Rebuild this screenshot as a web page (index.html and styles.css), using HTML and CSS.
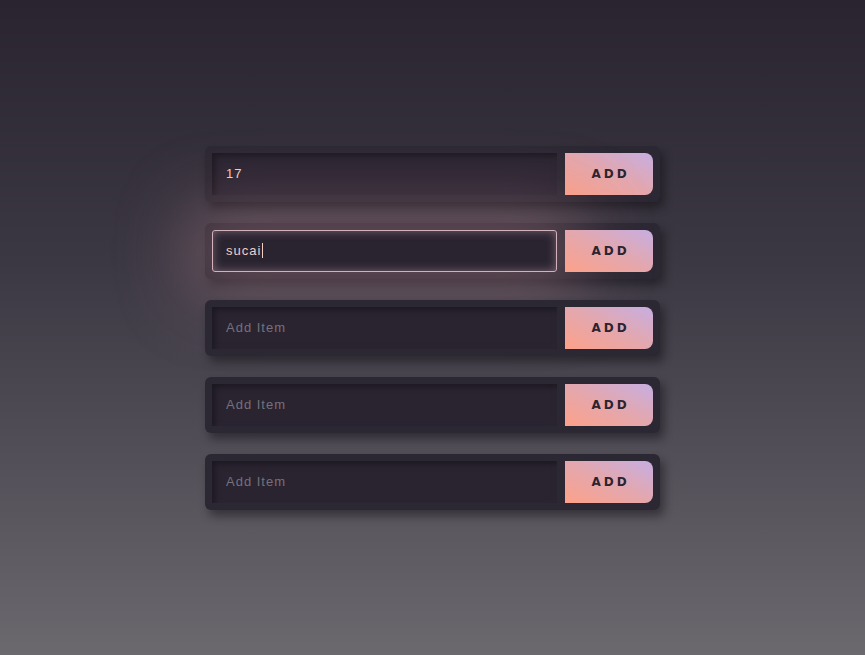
FILE: index.html
```html
<!DOCTYPE html>
<html lang="en">
<head>
	<meta charset="UTF-8">
	<title>Add Item Inputs</title>
	<link rel="stylesheet" href="styles.css">
</head>
<body>
	<div id="wrapper">
		<div class="row">
			<input class="field" type="text" value="17" placeholder="Add Item">
			<button class="addBtn">ADD</button>
		</div>
		<div class="row">
			<div class="field focused">sucai<span class="caret"></span></div>
			<button class="addBtn">ADD</button>
		</div>
		<div class="row">
			<input class="field" type="text" placeholder="Add Item">
			<button class="addBtn">ADD</button>
		</div>
		<div class="row">
			<input class="field" type="text" placeholder="Add Item">
			<button class="addBtn">ADD</button>
		</div>
		<div class="row">
			<input class="field" type="text" placeholder="Add Item">
			<button class="addBtn">ADD</button>
		</div>
	</div>
</body>
</html>
```

FILE: styles.css
```css
html, body {
	margin: 0;
	height: 100%;
}
body {
	background: linear-gradient(to bottom, #29242f 0%, #3c3843 40%, #524f58 70%, #6b686e 100%);
	font-family: "Liberation Sans", Arial, sans-serif;
	display: flex;
	align-items: center;
	justify-content: center;
}
#wrapper {
	display: flex;
	flex-direction: column;
	gap: 21px;
	width: 455px;
	margin-top: 1px;
}
.row {
	display: flex;
	gap: 8px;
	height: 42px;
	padding: 7px;
	background-color: #2c2833;
	border-radius: 6px;
	box-shadow: 4px 6px 10px rgba(10, 8, 14, 0.45);
}
.field {
	box-sizing: border-box;
	flex: 1;
	height: 42px;
	border: none;
	outline: none;
	margin: 0;
	padding: 0 14px 2px;
	background-color: #2a2431;
	box-shadow: inset 3px 3px 6px rgba(0, 0, 0, 0.35), inset -2px -2px 4px rgba(70, 62, 78, 0.15);
	color: #f3cfc4;
	font-family: "Liberation Sans", Arial, sans-serif;
	font-size: 13px;
	letter-spacing: 1px;
}
.field::placeholder {
	color: #75717b;
}
.focused {
	display: flex;
	align-items: center;
	border: 1px solid #d2b3bb;
	border-radius: 3px;
	padding: 0 13px 1px;
	box-shadow: inset 0 0 10px rgba(200, 160, 170, 0.5), 0 0 70px 24px rgba(200, 145, 155, 0.36);
}
.caret {
	display: inline-block;
	width: 1px;
	height: 15px;
	background-color: #f3cfc4;
	margin-left: 1px;
}
.addBtn {
	width: 88px;
	height: 42px;
	border: none;
	border-radius: 0 8px 8px 0;
	background: linear-gradient(to top right, #fda189 0%, #e4a7ad 50%, #c7aee2 100%);
	color: #2a2430;
	font-family: "DejaVu Sans", Verdana, sans-serif;
	font-size: 12px;
	font-weight: bold;
	letter-spacing: 3px;
	padding: 0 0 0 3px;
	cursor: pointer;
}
```
